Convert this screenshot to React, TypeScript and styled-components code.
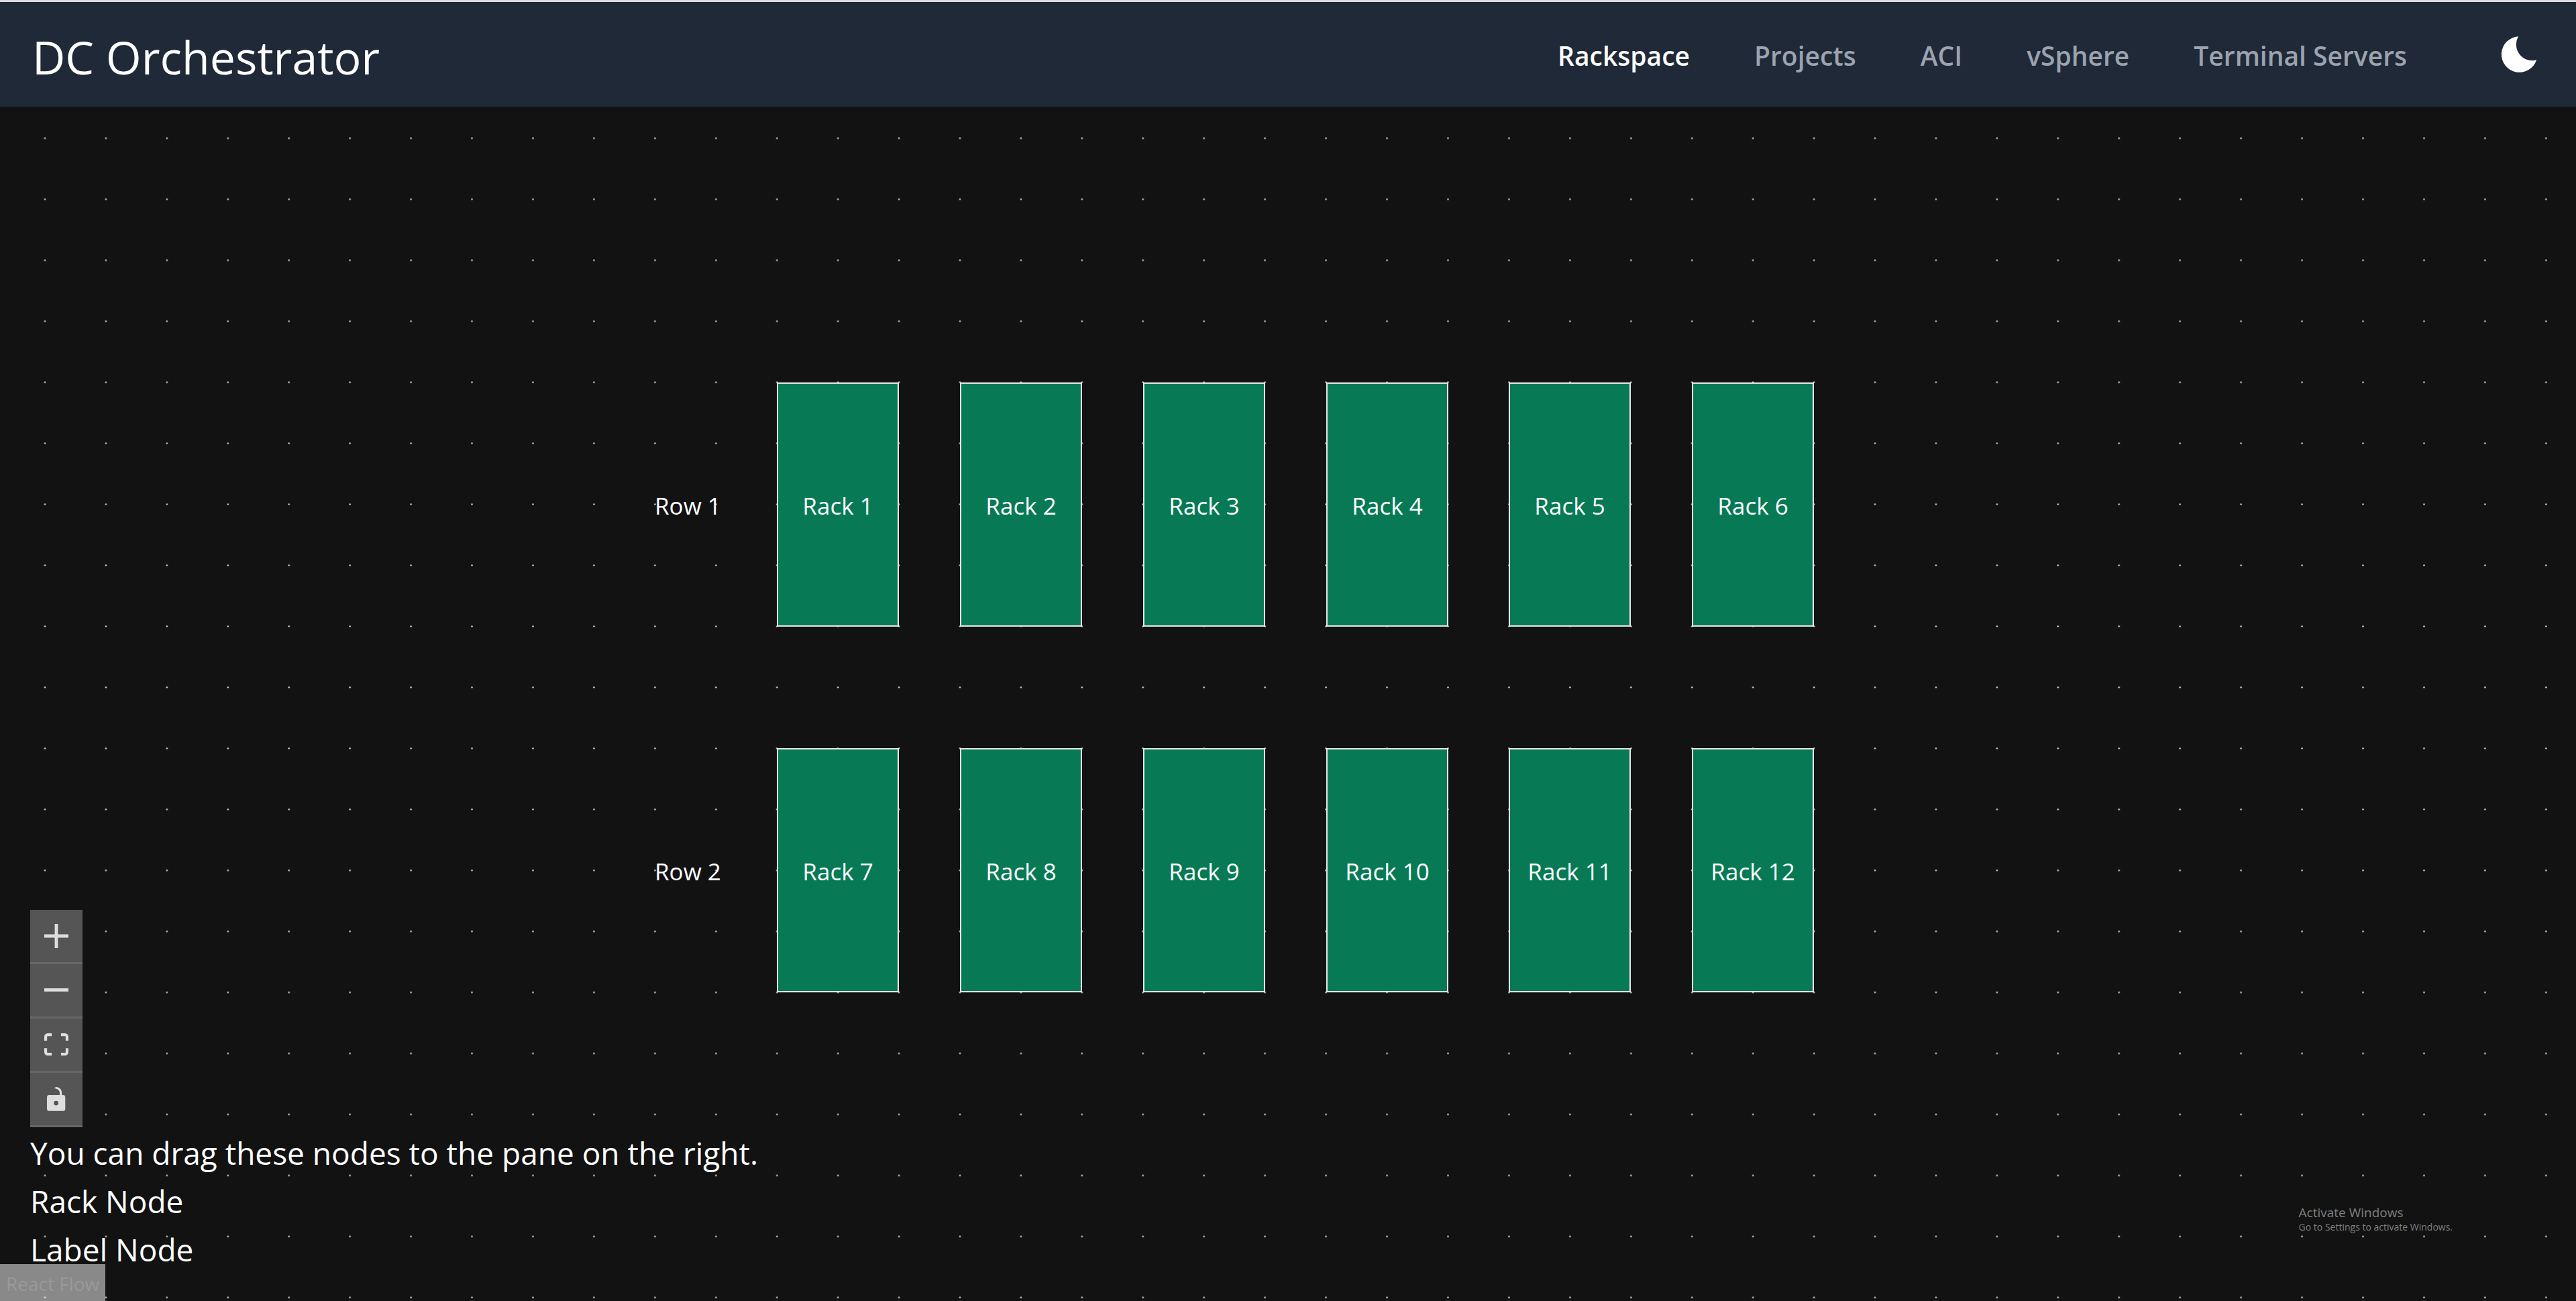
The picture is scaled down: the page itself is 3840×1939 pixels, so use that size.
import React from "react";
import styled, { createGlobalStyle } from "styled-components";

const GRID = 25;
const ZOOM = 3.6374;
const CELL = GRID * ZOOM;
const PAN = { x: 67, y: 47 };

const GlobalStyle = createGlobalStyle`
  *, *::before, *::after { box-sizing: border-box; }
  body {
    margin: 0;
    background: #121212;
    color: #fff;
    font-family: "Open Sans", "Noto Sans", sans-serif;
  }
`;

const Page = styled.div`
  display: flex;
  flex-direction: column;
  height: 100vh;
  overflow: hidden;
`;

const Header = styled.header`
  display: flex;
  align-items: center;
  height: 159px;
  padding: 0 58px 0 48px;
  border-top: 3px solid #dcdcde;
  background: #202938;
`;

const Brand = styled.h1`
  margin: 0 auto 0 0;
  padding-top: 8px;
  font-size: 68px;
  font-weight: 400;
  line-height: 96px;
`;

const Nav = styled.nav`
  display: flex;
  gap: 96px;
  margin-right: 140px;
  padding-top: 4px;
`;

const NavLink = styled.a<{ $active?: boolean }>`
  color: ${(p) => (p.$active ? "#ffffff" : "#9ca3af")};
  font-size: 39px;
  font-weight: 600;
  line-height: 56px;
  text-decoration: none;
`;

const ThemeButton = styled.button`
  display: flex;
  padding: 0;
  border: 0;
  background: none;
  color: #fff;
  cursor: pointer;
`;

const Canvas = styled.main`
  position: relative;
  flex: 1;
  min-height: 0;
  display: flex;
  flex-direction: column;
  justify-content: flex-end;
  overflow: hidden;
`;

const Dots = styled.svg`
  position: absolute;
  inset: 0;
  width: 100%;
  height: 100%;
`;

const FlowNode = styled.div`
  position: absolute;
  display: flex;
  align-items: center;
  height: 364px;
  padding-top: 4px;
  font-size: 35px;
  line-height: 56px;
  white-space: nowrap;
`;

const RackNode = styled(FlowNode)`
  justify-content: center;
  width: 182px;
  border: 2px solid #e5e7eb;
  background: #077a55;
`;

const LabelNode = styled(FlowNode)``;

const SidePanel = styled.aside`
  position: relative;
  align-self: flex-start;
  padding: 0 0 41px 45px;
  font-size: 46px;
  line-height: 72px;
`;

const Controls = styled.div`
  display: grid;
  width: 78px;
  margin-bottom: 2px;
`;

const ControlButton = styled.button`
  display: flex;
  align-items: center;
  justify-content: center;
  height: 81px;
  padding: 0;
  border: 0;
  border-bottom: 3px solid #676767;
  background: #555;
  color: #dedede;
  cursor: pointer;
`;

const Hint = styled.p`
  margin: 0;
`;

const DragItem = styled.div`
  cursor: grab;
`;

const Attribution = styled.a`
  position: absolute;
  left: 0;
  bottom: 0;
  padding: 9px 9px 6px;
  background: rgba(255, 255, 255, 0.5);
  color: #999;
  font-size: 28px;
  line-height: 40px;
  text-decoration: none;
`;

const Watermark = styled.div`
  position: absolute;
  right: 184px;
  bottom: 100px;
  color: #808080;
`;

const WatermarkTitle = styled.div`
  font-size: 19px;
  line-height: 24px;
`;

const WatermarkText = styled.div`
  font-size: 14px;
  line-height: 20px;
`;

const links = ["Rackspace", "Projects", "ACI", "vSphere", "Terminal Servers"];

const rows = [
  { label: "Row 1", y: 4, racks: [1, 2, 3, 4, 5, 6] },
  { label: "Row 2", y: 10, racks: [7, 8, 9, 10, 11, 12] },
];

const place = (col: number, row: number) => ({
  left: Math.round(PAN.x + col * CELL),
  top: Math.round(PAN.y + row * CELL),
});

const controls = [
  {
    label: "zoom in",
    width: 36,
    box: "0 0 32 32",
    d: "M32 18.133H18.133V32h-4.266V18.133H0v-4.266h13.867V0h4.266v13.867H32z",
  },
  { label: "zoom out", width: 36, box: "0 0 32 5", d: "M0 0h32v4.2H0z" },
  {
    label: "fit view",
    width: 36,
    box: "0 0 32 30",
    d: "M3.692 4.63c0-.53.4-.938.939-.938h5.215V0H4.708C2.13 0 0 2.054 0 4.63v5.216h3.692V4.631zM27.354 0h-5.2v3.692h5.17c.53 0 .984.4.984.939v5.215H32V4.631A4.624 4.624 0 0027.354 0zm.954 24.83c0 .532-.4.94-.939.94h-5.215v3.768h5.215c2.577 0 4.631-2.13 4.631-4.707v-5.139h-3.692v5.139zm-23.677.94c-.531 0-.939-.4-.939-.94v-5.138H0v5.139c0 2.577 2.13 4.707 4.708 4.707h5.138V25.77H4.631z",
  },
  {
    label: "toggle interactivity",
    width: 28,
    box: "0 0 25 32",
    d: "M21.333 10.667H19.81V7.619C19.81 3.429 16.38 0 12.19 0c-4.114 1.828-1.37 2.133.305 2.438 1.676.305 4.42 2.59 4.42 5.181v3.048H3.047A3.056 3.056 0 000 13.714v15.238A3.056 3.056 0 003.048 32h18.285a3.056 3.056 0 003.048-3.048V13.714a3.056 3.056 0 00-3.048-3.047zM12.19 24.533a3.056 3.056 0 01-3.047-3.047 3.056 3.056 0 013.047-3.048 3.056 3.056 0 013.048 3.048 3.056 3.056 0 01-3.048 3.047z",
  },
];

export default function App() {
  return (
    <Page>
      <GlobalStyle />
      <Header>
        <Brand>DC Orchestrator</Brand>
        <Nav>
          {links.map((name, i) => (
            <NavLink key={name} href="#" $active={i === 0}>
              {name}
            </NavLink>
          ))}
        </Nav>
        <ThemeButton aria-label="Toggle dark mode">
          <svg width="54" height="54" viewBox="8 8 54 54" fill="currentColor">
            <path d="M34 8.3A26.8 26.8 0 1 0 61.2 43.3A24 24 0 0 1 34 8.3z" />
          </svg>
        </ThemeButton>
      </Header>
      <Canvas>
        <Dots aria-hidden="true">
          <pattern
            id="dots"
            x={PAN.x - CELL / 2}
            y={PAN.y - CELL / 2}
            width={CELL}
            height={CELL}
            patternUnits="userSpaceOnUse"
          >
            <circle cx={CELL / 2} cy={CELL / 2} r="1.2" fill="#e5e5e5" />
          </pattern>
          <rect width="100%" height="100%" fill="url(#dots)" />
        </Dots>
        {rows.map((row) => (
          <React.Fragment key={row.label}>
            <LabelNode style={place(10, row.y)}>{row.label}</LabelNode>
            {row.racks.map((n, i) => (
              <RackNode key={n} style={place(12 + i * 3, row.y)}>
                Rack {n}
              </RackNode>
            ))}
          </React.Fragment>
        ))}
        <SidePanel>
          <Controls>
            {controls.map((c) => (
              <ControlButton key={c.label} aria-label={c.label}>
                <svg width={c.width} viewBox={c.box} fill="currentColor">
                  <path d={c.d} />
                </svg>
              </ControlButton>
            ))}
          </Controls>
          <Hint>You can drag these nodes to the pane on the right.</Hint>
          <DragItem draggable>Rack Node</DragItem>
          <DragItem draggable>Label Node</DragItem>
        </SidePanel>
        <Watermark>
          <WatermarkTitle>Activate Windows</WatermarkTitle>
          <WatermarkText>Go to Settings to activate Windows.</WatermarkText>
        </Watermark>
        <Attribution href="#">React Flow</Attribution>
      </Canvas>
    </Page>
  );
}
